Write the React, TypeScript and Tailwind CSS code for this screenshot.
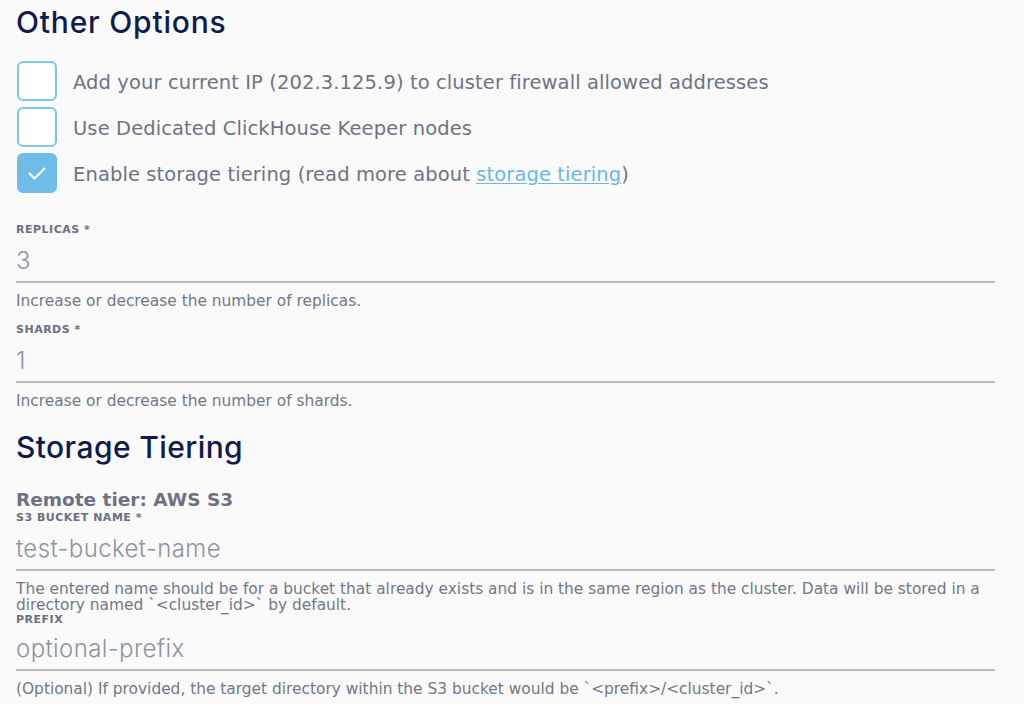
const body = "font-['DejaVu_Sans',sans-serif]";
const display = "font-['Inter',sans-serif]";

function Checkbox({ checked }: { checked?: boolean }) {
  return (
    <span
      className={
        checked
          ? 'ml-px flex h-10 w-10 shrink-0 items-center justify-center rounded-md border-2 border-[#6fbce8] bg-[#6fbce8]'
          : 'ml-px flex h-10 w-10 shrink-0 items-center justify-center rounded-md border-2 border-[#7fc4ec] bg-white'
      }
    >
      {checked && (
        <svg width="18" height="13" viewBox="0 0 18 13" fill="none">
          <path d="M1.5 6.5 L6.5 11.5 L16.5 1.5" stroke="white" strokeWidth="2" strokeLinecap="round" strokeLinejoin="round" />
        </svg>
      )}
    </span>
  );
}

function Field({
  label,
  value,
  help,
  className = '',
  inputGap = 'mt-[10px]',
}: {
  label: string;
  value: string;
  help: React.ReactNode;
  className?: string;
  inputGap?: string;
}) {
  return (
    <div className={className}>
      <div className={`${body} text-[11px] leading-[14px] font-bold tracking-[0.5px] text-[#6a6f81]`}>{label}</div>
      <div className={`${inputGap} border-b-2 border-[#b8bccb] pb-[6px]`}>
        <span className={`${display} text-[24px] leading-[28px] font-light tracking-[0.4px] text-[#8e92a2]`}>{value}</span>
      </div>
      <p className={`${body} mt-[10px] text-[15.4px] leading-[16px] text-[#72778a]`}>{help}</p>
    </div>
  );
}

export default function App() {
  const options = [
    { text: <>Add your current IP (202.3.125.9) to cluster firewall allowed addresses</>, checked: false },
    { text: <>Use Dedicated ClickHouse Keeper nodes</>, checked: false },
    {
      text: (
        <>
          Enable storage tiering (read more about{' '}
          <a href="#" className="text-[#6cb7e5] underline underline-offset-2">
            storage tiering
          </a>
          )
        </>
      ),
      checked: true,
    },
  ];

  return (
    <div className="min-h-[704px] bg-[#fafafa] pt-1 pl-4 pr-[29px]">
      <h2 className={`${display} text-[30px] leading-[36px] font-medium tracking-[0.8px] text-[#0e1b4d]`}>Other Options</h2>

      <div className="mt-[21px] flex flex-col gap-[6px]">
        {options.map((o, i) => (
          <label key={i} className="flex h-10 items-center gap-4">
            <Checkbox checked={o.checked} />
            <span className={`${body} mt-1 text-[19.5px] leading-[24px] tracking-[0.1px] text-[#6e7386]`}>{o.text}</span>
          </label>
        ))}
      </div>

      <Field className="mt-[30px]" label="REPLICAS *" value="3" help="Increase or decrease the number of replicas." />
      <Field className="mt-[14px]" label="SHARDS *" value="1" help="Increase or decrease the number of shards." />

      <h2 className={`${display} mt-5 text-[30px] leading-[36px] font-medium tracking-[0.4px] text-[#0e1b4d]`}>
        Storage Tiering
      </h2>
      <h3 className={`${body} mt-6 text-[18.5px] leading-[22px] font-bold text-[#6d7183]`}>Remote tier: AWS S3</h3>

      <Field
        label="S3 BUCKET NAME *"
        value="test-bucket-name"
        help="The entered name should be for a bucket that already exists and is in the same region as the cluster. Data will be stored in a directory named `<cluster_id>` by default."
      />
      <Field
        label="PREFIX"
        inputGap="mt-2"
        value="optional-prefix"
        help="(Optional) If provided, the target directory within the S3 bucket would be `<prefix>/<cluster_id>`."
      />
    </div>
  );
}
